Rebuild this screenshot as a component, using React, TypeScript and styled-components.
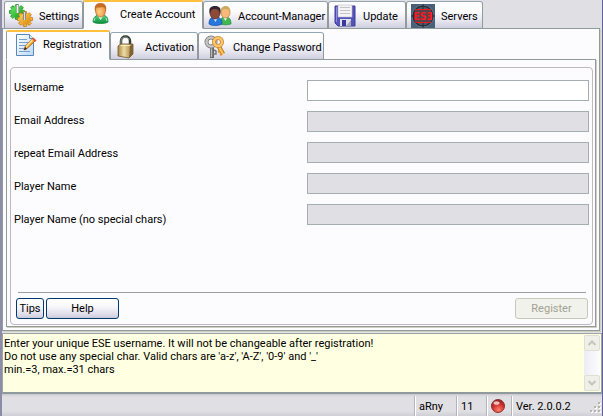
import React from 'react';
import styled, { createGlobalStyle, css } from 'styled-components';

const GlobalStyle = createGlobalStyle`
  * { box-sizing: border-box; }
  body {
    margin: 0;
    background: #e0dfe3;
    color: #000;
    font: 11px/13px Tahoma, Roboto, "DejaVu Sans Condensed", sans-serif;
  }
  button, input { font: inherit; color: inherit; }
`;

const Window = styled.div`
  display: flex;
  flex-direction: column;
  min-height: 100vh;
  border-left: 2px solid #8c8ca8;
  border-right: 1px solid #62629a;
`;

const TabRow = styled.div<{ $inner?: boolean }>`
  display: flex;
  align-items: flex-end;
  position: relative;
  margin-bottom: -1px;
  height: ${p => (p.$inner ? 30 : 29)}px;
  padding-left: ${p => (p.$inner ? 0 : 2)}px;
`;

const Tab = styled.button<{ $active?: boolean; $width: number; $gap?: number; $indent?: number }>`
  display: flex;
  align-items: center;
  flex: 0 0 auto;
  width: ${p => p.$width}px;
  height: 28px;
  padding: 2px 0 0 ${p => p.$indent ?? 4}px;
  gap: ${p => p.$gap ?? 6}px;
  white-space: nowrap;
  border: 1px solid #919b9c;
  border-top-color: #91a7b4;
  border-radius: 3px 3px 0 0;
  background: linear-gradient(#fff 0%, #fcfcfe 35%, #e8e7f1 70%, #cfcfdf 100%);
  & > svg { flex: none; }
  ${p => p.$active && css`
    height: 100%;
    padding-top: 0;
    padding-bottom: 2px;
    background: #fcfcfe;
    border-top: 2px solid #ffc03c;
    border-bottom-color: #fcfcfe;
    border-radius: 2px 2px 0 0;
  `}
`;

const OuterPage = styled.div`
  display: flex;
  flex-direction: column;
  flex: 1;
  margin-right: 2px;
  padding: 1px 3px 3px;
  background: #fcfcfe;
  border: 1px solid #919b9c;
  box-shadow: 1px 1px #d0cebf;
`;

const InnerPage = styled.div`
  display: flex;
  flex: 1;
  padding: 7px 2px 1px 3px;
  border: 1px solid #919b9c;
  box-shadow: 1px 1px #d0cebf;
`;

const Group = styled.form`
  display: flex;
  flex-direction: column;
  flex: 1;
  padding: 0 3px 5px;
  border: 1px solid #bfb8bf;
  border-radius: 4px;
`;

const Fields = styled.div`
  display: flex;
  flex: 1;
`;

const Labels = styled.div`
  display: flex;
  flex-direction: column;
  flex: 0 1 293px;
  gap: 20px;
  padding-top: 13px;
`;

const Inputs = styled.div`
  display: flex;
  flex-direction: column;
  flex: 1;
  gap: 10px;
  padding-top: 12px;
`;

const TextBox = styled.input`
  width: 100%;
  height: 21px;
  padding: 2px 3px;
  border: 1px solid #a5acb2;
  border-radius: 0;
  background: #fff;
  outline: none;
  &:disabled { background: #e0dfe3; }
`;

const Rule = styled.hr`
  width: calc(100% - 7px);
  height: 1px;
  margin: 0 3px 5px 4px;
  border: 0;
  background: #9d9da1;
`;

const Actions = styled.div`
  display: flex;
  gap: 2px;
  padding: 0 1px 0 2px;
`;

const PushButton = styled.button<{ $narrow?: boolean }>`
  width: ${p => (p.$narrow ? 28 : 73)}px;
  height: 21px;
  padding: 0;
  border: 1px solid #003c74;
  border-radius: 3px;
  background: linear-gradient(#fff 0%, #f8f8fb 40%, #d8d6e5 90%, #c6c5d7 100%);
  &:disabled {
    margin-left: auto;
    border-color: #c9c7ba;
    background: #f2f2ed;
    color: #a1a192;
  }
`;

const Hint = styled.section`
  display: flex;
  flex: none;
  height: 61px;
  margin-top: 2px;
  background: #ffffe1;
  border: 1px solid #9da5a5;
  border-bottom: 2px solid #8e9a9b;
`;

const HintText = styled.p`
  flex: 1;
  margin: 0;
  padding: 3px 0 0 1px;
`;

const ScrollBar = styled.div`
  display: flex;
  flex-direction: column;
  justify-content: space-between;
  width: 16px;
  margin: 1px;
  background: linear-gradient(90deg, #ececf4, #fdfdff);
`;

const ScrollButton = styled.button`
  display: flex;
  align-items: center;
  justify-content: center;
  width: 16px;
  height: 16px;
  padding: 0;
  border: 1px solid #e0dfd4;
  border-radius: 2px;
  background: #f0f0e9;
`;

const StatusBar = styled.footer`
  display: flex;
  align-items: stretch;
  flex: none;
  height: 22px;
  padding-top: 2px;
  background: linear-gradient(#c9c9cf 0, #e0dfe3 3px, #e0dfe3 17px, #cfced5 100%);
`;

const StatusCell = styled.div<{ $width?: number }>`
  display: flex;
  align-items: center;
  flex: ${p => (p.$width ? `0 0 ${p.$width}px` : 1)};
  padding: 0 0 0 4px;
  white-space: nowrap;
  & + & {
    border-left: 1px solid #b4b4bb;
    box-shadow: inset 1px 0 #fff;
  }
`;

const Grip = styled.svg`
  align-self: flex-end;
  margin: 0 0 1px auto;
`;

const GearShape = ({ fill, edge }: { fill: string; edge: string }) => (
  <g stroke={edge} strokeWidth=".7">
    {[0, 45, 90, 135, 180, 225, 270, 315].map(a => (
      <rect key={a} x="-1.7" y="-7.5" width="3.4" height="4" rx=".5" fill={fill} transform={`rotate(${a})`} />
    ))}
    <circle r="5.8" fill={fill} stroke="none" />
  </g>
);

const GearsIcon = () => (
  <svg width="24" height="24" viewBox="0 0 24 24">
    <defs>
      <linearGradient id="gearGreen" x2="1" y2="1"><stop stopColor="#6be86a" /><stop offset="1" stopColor="#129a18" /></linearGradient>
      <linearGradient id="gearGold" x2="1" y2="1"><stop stopColor="#ffd35c" /><stop offset="1" stopColor="#d98408" /></linearGradient>
    </defs>
    <g transform="translate(8 8)"><GearShape fill="url(#gearGreen)" edge="#118419" /></g>
    <path d="M7 1h3v8H7z" fill="#a9a9a9" /><path d="M8 1h1v8H8z" fill="#eee" />
    <g transform="translate(16 15)"><GearShape fill="url(#gearGold)" edge="#b96d08" /></g>
    <path d="M14 8h3v8h-3z" fill="#8b8b8b" /><path d="M15 8h1v8h-1z" fill="#ddd" />
  </svg>
);

const UserIcon = () => (
  <svg width="24" height="24" viewBox="0 0 24 24">
    <defs>
      <linearGradient id="shirt" y2="1" x2="0"><stop stopColor="#5bd184" /><stop offset="1" stopColor="#0c8f3d" /></linearGradient>
      <radialGradient id="face" cx=".4" cy=".6"><stop stopColor="#ffd08a" /><stop offset="1" stopColor="#ee9e45" /></radialGradient>
    </defs>
    <path d="M5 20c0-4 2-6 5-7h5c4 1 5 3 5 7-3 2-12 2-15 0z" fill="url(#shirt)" stroke="#16873c" strokeWidth=".8" />
    <path d="m9 13 3.500 5 3.500-5z" fill="#e8fff0" />
    <path d="M7.500 8c0-4 2-6 5-6s5 2 5 6c0 4-2 7-5 7s-5-3-5-7z" fill="url(#face)" stroke="#b8662a" strokeWidth=".8" />
    <path d="M7 9c-1-5 1-8 5.500-8S19 4 18 9c-1-3-2-4-4-4-3 1-5 0-6 1z" fill="#c66a25" />
    <path d="m7 16-1 3m12-3 1 3" stroke="#a3edbd" />
  </svg>
);

const UsersIcon = () => (
  <svg width="24" height="24" viewBox="0 0 24 24">
    <path d="M12 20c0-5 2-7 4-7h3c3 1 4 3 4 7-3 1-8 1-11 0z" fill="#43b851" stroke="#20883a" strokeWidth=".7" />
    <path d="m15 13 2.500 4 2-4z" fill="#efffef" />
    <ellipse cx="17.500" cy="8.500" rx="4.500" ry="5.500" fill="#f7b978" stroke="#b8773d" strokeWidth=".7" />
    <path d="M13 8c-1-4 2-6 5-6s5 3 4 7c-1-3-2-4-4-4s-4 0-5 3z" fill="#caa961" />
    <path d="M1 20c0-5 2-7 5-7h3c4 1 5 3 5 7-4 2-10 2-13 0z" fill="#2877dc" stroke="#164fa4" strokeWidth=".7" />
    <path d="m5 14 2.500 4 2-4z" fill="#d8edff" />
    <ellipse cx="7" cy="9" rx="5" ry="6" fill="#8c4a37" stroke="#4a2524" strokeWidth=".7" />
    <path d="M2 10C0 4 3 2 7 2s7 2 5 8c-1-4-2-5-5-5S3 6 2 10z" fill="#342431" />
  </svg>
);

const FloppyIcon = () => (
  <svg width="24" height="24" viewBox="0 0 24 24">
    <path d="M2 2h20v20H5l-3-3z" fill="#5454bb" stroke="#3e3e96" />
    <path d="M3 3h1v15H3z" fill="#8c8ce1" />
    <path d="M5 1h14v12H5z" fill="#f4f4f4" stroke="#b9b9c9" strokeWidth=".6" />
    <path d="M7 3.500h10M7 6.500h10M7 9.500h10" stroke="#c4c4c8" />
    <path d="M7 15h11v7H7z" fill="#dedeec" /><path d="M9 16h4v6H9z" fill="#38389a" />
    <path d="m13 22 5-6v6z" fill="#a4a4bd" />
  </svg>
);

const ServersIcon = () => (
  <svg width="24" height="24" viewBox="0 0 24 24">
    <rect width="24" height="24" fill="#486078" />
    <circle cx="12" cy="12" r="10" fill="#4e5a66" stroke="#252d38" strokeWidth="1.500" />
    <circle cx="12" cy="12" r="11" fill="none" stroke="#8495a2" strokeWidth=".5" />
    <path d="M12 0v24M0 12h24" stroke="#202a33" strokeWidth="1" />
    <rect x="5" y="6" width="14" height="12" fill="#59434b" />
    <text x="12" y="16" textAnchor="middle" fontFamily="DejaVu Sans Condensed, sans-serif" fontSize="10" fontWeight="700" fill="#ff1820">ESƎ</text>
    <path d="M4.500 6.500v-1h15v1M4.500 17.500v1h15v-1" fill="none" stroke="#ef1820" />
  </svg>
);

const NoteIcon = () => (
  <svg width="24" height="24" viewBox="0 0 24 24">
    <defs><linearGradient id="paper" x2="1" y2="1"><stop stopColor="#fff" /><stop offset="1" stopColor="#bad9f4" /></linearGradient></defs>
    <path d="M1.500 1.500h13l4 4v17h-17z" fill="url(#paper)" stroke="#5a87ba" />
    <path d="M14.500 1.500v4h4" fill="#dceafa" stroke="#5a87ba" />
    <path d="M4 6.500h8M4 9.500h10M4 12.500h7M4 15.500h5M4 18.500h11" stroke="#789fc9" />
    <path d="m9 17 1.500-4L18 5l2.500 2.500-8.500 8z" fill="#ffae26" stroke="#8a4e18" strokeWidth=".8" />
    <path d="m11 14 7-8" stroke="#ffe39b" strokeWidth="1.300" />
    <path d="m17 6 1.500-1.500 3 3L20 9z" fill="#df5541" /><path d="m9 17 1-3 2 2z" fill="#33251f" />
  </svg>
);

const LockIcon = () => (
  <svg width="24" height="24" viewBox="0 0 24 24">
    <defs><linearGradient id="brass"><stop stopColor="#a28445" /><stop offset=".4" stopColor="#f0dda2" /><stop offset="1" stopColor="#987338" /></linearGradient></defs>
    <path d="M6 12V6c0-6 9-6 9 0v5" fill="none" stroke="#343b34" strokeWidth="2.500" />
    <path d="M6 11V6c0-5 8-5 8-1" fill="none" stroke="#95a092" strokeWidth="1" />
    <path d="m3 11 3-2 12 0v10l-4 4-11-2z" fill="url(#brass)" stroke="#75592e" strokeWidth=".8" />
    <path d="m15 11 3-2v10l-4 4z" fill="#806331" /><path d="m4 11 3-1 9 0-2 1z" fill="#fff0bd" />
  </svg>
);

const KeysIcon = () => (
  <svg width="24" height="24" viewBox="0 0 24 24" fill="none">
    <path d="M9 10v13" stroke="#666" strokeWidth="4" /><path d="M8.500 10v12" stroke="#bbb" strokeWidth="1.500" />
    <circle cx="8" cy="7" r="4.500" stroke="#777" strokeWidth="4" /><circle cx="8" cy="7" r="4.500" stroke="#c4c4c4" strokeWidth="2.500" />
    <path d="m11 15 2 1v3h-3" stroke="#777" strokeWidth="1.500" />
    <path d="m15 10 5 9" stroke="#bc751b" strokeWidth="4.500" /><path d="m15 10 5 9" stroke="#ffc35c" strokeWidth="2.500" />
    <circle cx="15" cy="7" r="4" stroke="#c9832f" strokeWidth="4" /><circle cx="15" cy="7" r="4" stroke="#ffc66a" strokeWidth="2.500" />
    <path d="m17 16-2 1m4 2-2 1" stroke="#e5942c" strokeWidth="2" />
  </svg>
);

const StatusLight = () => (
  <svg width="14" height="14" viewBox="0 0 14 14">
    <defs><radialGradient id="lamp" cx=".55" cy=".8" r=".8"><stop stopColor="#ff8070" /><stop offset=".5" stopColor="#d63834" /><stop offset="1" stopColor="#872020" /></radialGradient></defs>
    <circle cx="7" cy="7" r="6.500" fill="url(#lamp)" stroke="#8b3434" />
    <ellipse cx="5.500" cy="4" rx="3" ry="1.800" fill="#ffd7d2" opacity=".85" />
  </svg>
);

const Chevron = ({ down }: { down?: boolean }) => (
  <svg width="10" height="8" viewBox="0 0 10 8"><path d={down ? 'm1.500 2 3.500 3.500L8.500 2' : 'M1.500 6 5 2.500 8.500 6'} fill="none" stroke="#c5c5b9" strokeWidth="2" /></svg>
);

const fields = [
  { id: 'username', label: 'Username' },
  { id: 'email', label: 'Email Address' },
  { id: 'repeat-email', label: 'repeat Email Address' },
  { id: 'player', label: 'Player Name' },
  { id: 'player-plain', label: 'Player Name (no special chars)' },
];

export default function App() {
  return (
    <>
      <GlobalStyle />
      <Window>
        <TabRow role="tablist">
          <Tab role="tab" $width={79}><GearsIcon />Settings</Tab>
          <Tab role="tab" aria-selected $active $width={120} $gap={8}><UserIcon />Create Account</Tab>
          <Tab role="tab" $width={125}><UsersIcon />Account-Manager</Tab>
          <Tab role="tab" $width={78}><FloppyIcon />Update</Tab>
          <Tab role="tab" $width={77}><ServersIcon />Servers</Tab>
        </TabRow>
        <OuterPage>
          <TabRow role="tablist" $inner>
            <Tab role="tab" aria-selected $active $width={104} $gap={4} $indent={8}><NoteIcon />Registration</Tab>
            <Tab role="tab" $width={88}><LockIcon />Activation</Tab>
            <Tab role="tab" $width={126}><KeysIcon />Change Password</Tab>
          </TabRow>
          <InnerPage>
            <Group onSubmit={e => e.preventDefault()}>
              <Fields>
                <Labels>
                  {fields.map(f => <label key={f.id} htmlFor={f.id}>{f.label}</label>)}
                </Labels>
                <Inputs>
                  {fields.map((f, i) => <TextBox key={f.id} id={f.id} type="text" disabled={i > 0} />)}
                </Inputs>
              </Fields>
              <Rule />
              <Actions>
                <PushButton type="button" $narrow>Tips</PushButton>
                <PushButton type="button">Help</PushButton>
                <PushButton type="submit" disabled>Register</PushButton>
              </Actions>
            </Group>
          </InnerPage>
        </OuterPage>
        <Hint>
          <HintText>
            Enter your unique ESE username. It will not be changeable after registration!<br />
            Do not use any special char. Valid chars are 'a-z', 'A-Z', '0-9' and '_'<br />
            min.=3, max.=31 chars
          </HintText>
          <ScrollBar>
            <ScrollButton aria-label="Scroll up"><Chevron /></ScrollButton>
            <ScrollButton aria-label="Scroll down"><Chevron down /></ScrollButton>
          </ScrollBar>
        </Hint>
        <StatusBar>
          <StatusCell />
          <StatusCell $width={42}>aRny</StatusCell>
          <StatusCell $width={30}>11</StatusCell>
          <StatusCell $width={25}><StatusLight /></StatusCell>
          <StatusCell $width={77}>Ver. 2.0.0.2</StatusCell>
          <Grip width="14" height="14" viewBox="0 0 14 14">
            {[[10, 1], [6, 5], [10, 5], [2, 9], [6, 9], [10, 9]].map(([x, y]) => (
              <g key={`${x}-${y}`}>
                <rect x={x + 1} y={y + 1} width="2" height="2" fill="#fff" />
                <rect x={x} y={y} width="2" height="2" fill="#b8b4a8" />
              </g>
            ))}
          </Grip>
        </StatusBar>
      </Window>
    </>
  );
}
